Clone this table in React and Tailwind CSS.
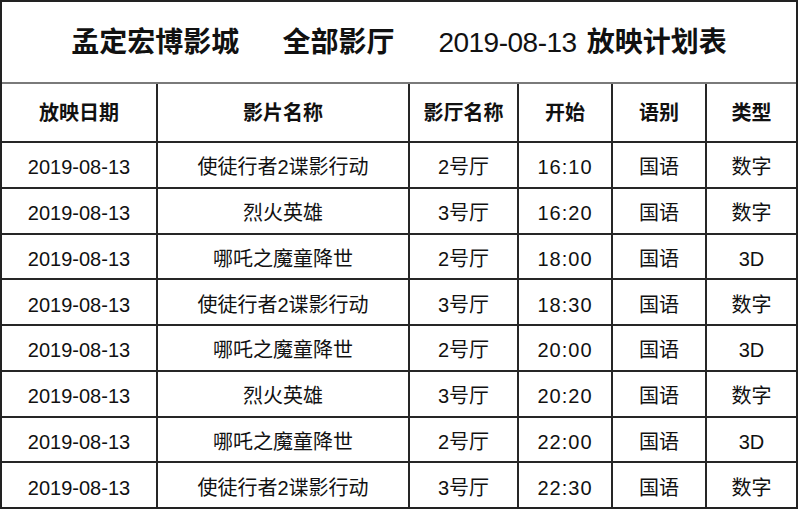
import React from "react";

const rows = [
  ["2019-08-13", "使徒行者2谍影行动", "2号厅", "16:10", "国语", "数字"],
  ["2019-08-13", "烈火英雄", "3号厅", "16:20", "国语", "数字"],
  ["2019-08-13", "哪吒之魔童降世", "2号厅", "18:00", "国语", "3D"],
  ["2019-08-13", "使徒行者2谍影行动", "3号厅", "18:30", "国语", "数字"],
  ["2019-08-13", "哪吒之魔童降世", "2号厅", "20:00", "国语", "3D"],
  ["2019-08-13", "烈火英雄", "3号厅", "20:20", "国语", "数字"],
  ["2019-08-13", "哪吒之魔童降世", "2号厅", "22:00", "国语", "3D"],
  ["2019-08-13", "使徒行者2谍影行动", "3号厅", "22:30", "国语", "数字"],
];

const headers = ["放映日期", "影片名称", "影厅名称", "开始", "语别", "类型"];

const font = {
  fontFamily: '"Liberation Sans", "Noto Sans CJK SC", sans-serif',
};

export default function App() {
  return (
    <div className="w-[800px] h-[510px] bg-white text-[#111]" style={font}>
      <div className="w-[798px] h-[509px] border-2 border-[#222] flex flex-col">
        <div className="h-[82px] border-b-2 border-[#7a7a7a] flex items-center justify-center pt-[2px] text-[28px] leading-none">
          <span className="font-bold">孟定宏博影城</span>
          <span className="font-bold ml-[43px]">全部影厅</span>
          <span className="ml-[44px] tracking-[-0.5px]">2019-08-13</span>
          <span className="font-bold ml-[10px]">放映计划表</span>
        </div>
        <div className="flex-1 grid grid-cols-[154px_250px_107px_92px_92px_1fr] grid-rows-[57px_repeat(8,1fr)] gap-[2px] bg-[#262626]">
          {headers.map((h) => (
            <div
              key={h}
              className="bg-white flex items-center justify-center text-[20px] font-bold leading-none pt-[1px]"
            >
              {h}
            </div>
          ))}
          {rows.map((r, i) =>
            r.map((c, j) => (
              <div
                key={i + "-" + j}
                className={
                  j === 3
                    ? "bg-white flex items-center justify-center text-[20px] leading-none pt-[5px] tracking-[1px]"
                    : "bg-white flex items-center justify-center text-[20px] leading-none pt-[5px]"
                }
              >
                {c}
              </div>
            ))
          )}
        </div>
      </div>
    </div>
  );
}
